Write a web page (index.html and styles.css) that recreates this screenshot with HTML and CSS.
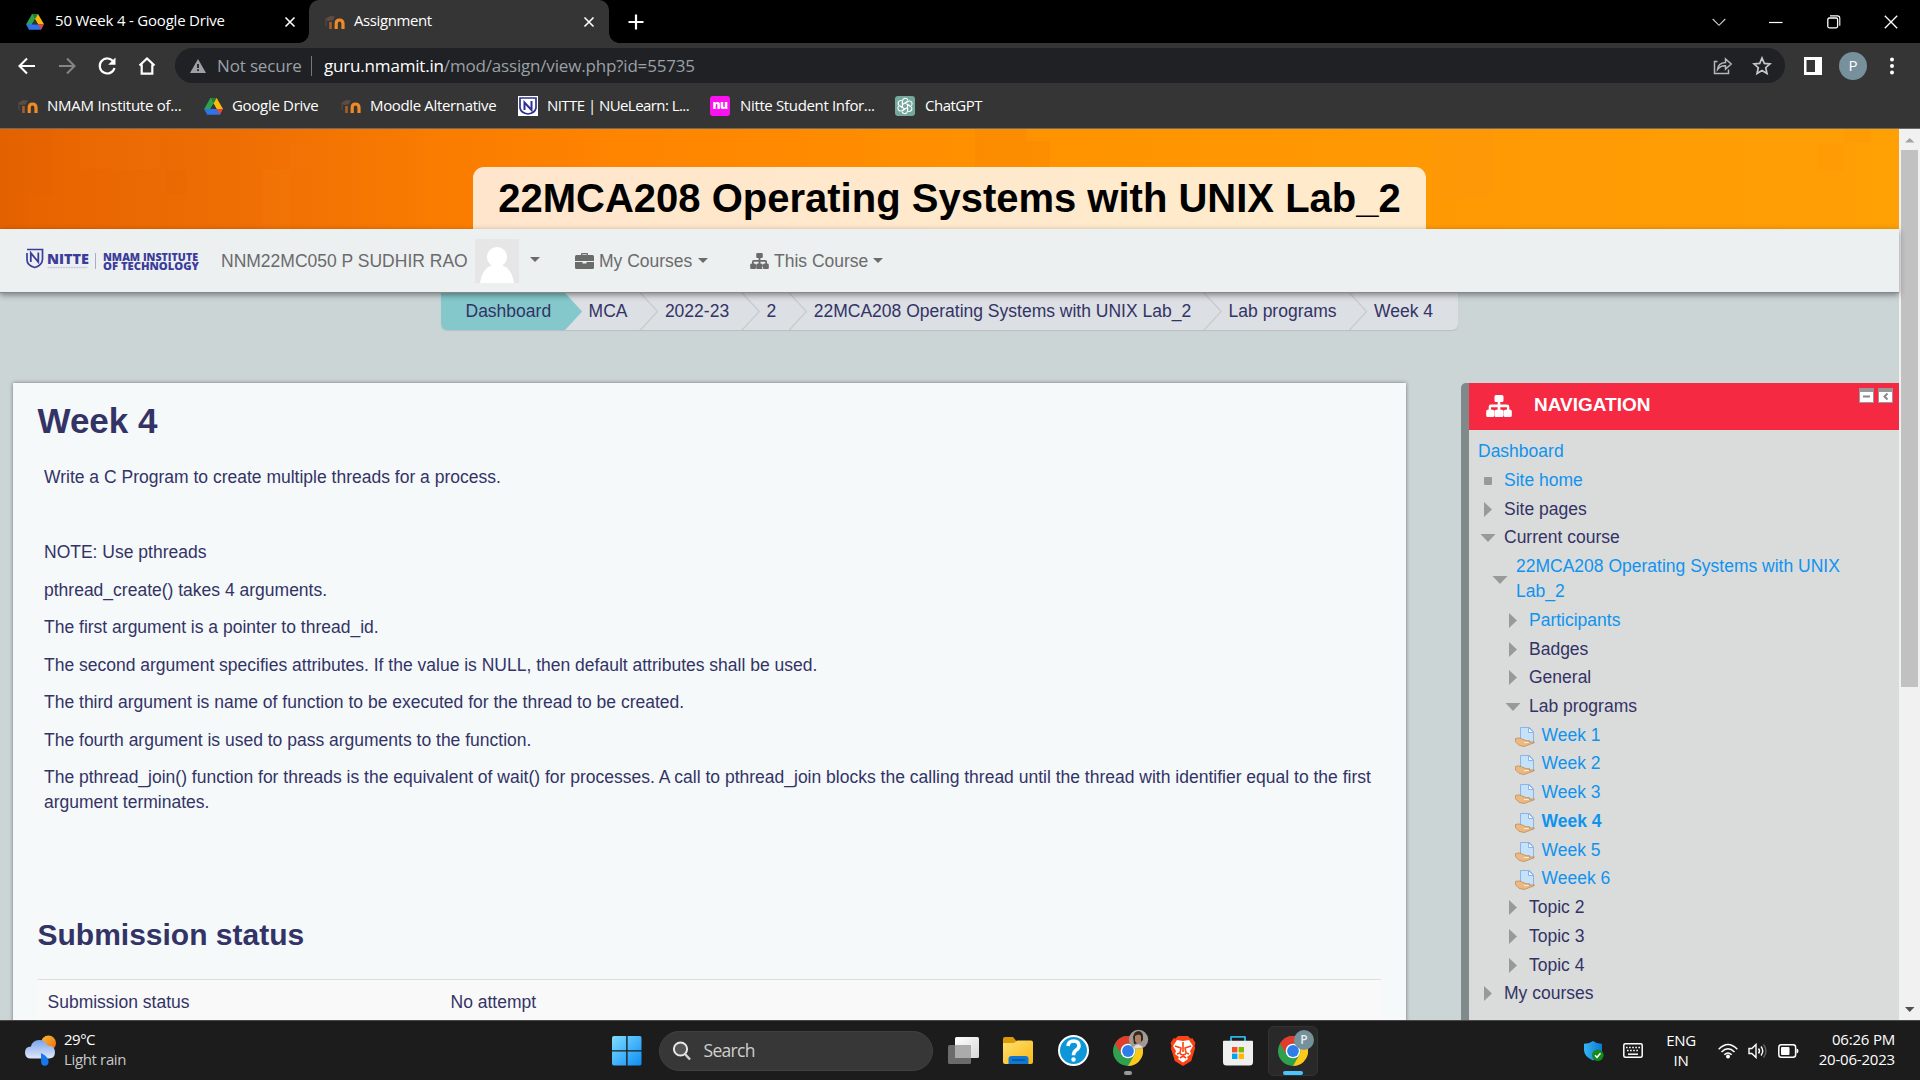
FILE: index.html
```html
<!DOCTYPE html>
<html lang="en">
<head>
<meta charset="utf-8">
<title>Assignment</title>
<link rel="stylesheet" href="styles.css">
</head>
<body>
<svg class="defs" width="0" height="0">
  <defs>
    <symbol id="drive" viewBox="0 0 18 16">
      <path fill="#2aa24f" d="M6 0h6L3.200 15.300.200 10.300z"/>
      <path fill="#fdbb09" d="M6 0h6l6 10.300h-6z"/>
      <path fill="#2f73e8" d="M.200 10.300h17.600L15 15.800H3z"/>
      <path fill="#188038" d="M6 0h6L9 5.200z"/>
      <path fill="#ea4335" d="M12 10.300h5.800L15 15.800z"/>
      <path fill="#353535" d="M9 5.300l2.900 5H6.100z"/>
    </symbol>
    <symbol id="moodle" viewBox="0 0 20 16">
      <path fill="none" stroke="#a85f2c" stroke-width="2.600" d="M5.500 15V8"/>
      <path fill="none" stroke="#f08a24" stroke-width="3.200" d="M11.200 15V9.500Q11.200 6 14.500 6T18 9.500V15"/>
      <path fill="#5c4c42" d="M0 5l5-3 5 .500-2.500 4L3 7z"/>
      <path stroke="#5c4c42" d="M1 5v7"/>
    </symbol>
    <symbol id="sitemap" viewBox="0 0 26 22">
      <path fill="currentColor" d="M10 0h6q1.500 0 1.500 1.500v4q0 1.500-1.500 1.500h-1.700v2.500H21q2.300 0 2.300 2.300v2.700q2.500 0 2.500 1.500v4.500q0 1.500-1.500 1.500h-5q-1.500 0-1.500-1.500V16q0-1.500 3.200-1.500v-2.300h-6.700v2.300q3.200 0 3.200 1.500v4.500Q17.500 22 16 22h-6q-1.500 0-1.500-1.500V16q0-1.500 3.200-1.500v-2.300H5v2.300q3.200 0 3.200 1.500v4.500Q8.200 22 6.700 22h-5Q.200 22 .200 20.500V16q0-1.500 2.500-1.500v-2.700q0-2.300 2.300-2.300h6.700V7H10Q8.500 7 8.500 5.500v-4Q8.500 0 10 0z"/>
    </symbol>
    <symbol id="caret" viewBox="0 0 10 5"><path fill="#6b6b6b" d="M0 0h10L5 5z"/></symbol>
    <symbol id="closed" viewBox="0 0 16 16"><path fill="#999" d="M4 0l8 7.500L4 15z"/></symbol>
    <symbol id="open" viewBox="0 0 16 16"><path fill="#999" d="M.500 4h15L8 12z"/></symbol>
    <symbol id="leaf" viewBox="0 0 16 16"><rect x="4" y="4" width="8" height="8" rx="1" fill="#999"/></symbol>
    <symbol id="assign" viewBox="0 0 20 20">
      <path fill="#c5e2f8" stroke="#8bb2ea" d="M5.500.500h9l4 4.500v11h-13z"/>
      <path fill="#f3faff" stroke="#8bb2ea" d="M13.500.500l5 5h-5z"/>
      <path fill="#ecb983" stroke="#c08a55" stroke-width=".800" d="M.500 11.500q3-1.300 6 .200l4.500 2h3.500q1 1-1 1.600l5.500-.500q1.300.300-.500 1.200L9 19.500l-5-1.200-3.500-3.500z"/>
      <path fill="none" stroke="#fff" stroke-width=".700" d="M9 15.500h5"/>
    </symbol>
    <symbol id="chrome" viewBox="0 0 30 30">
      <circle cx="15" cy="15" r="15" fill="#2fa04e"/>
      <path fill="#e33b2e" d="M2 7.500A15 15 0 0 1 28 7.500H15A7.500 7.500 0 0 0 8.500 18.700z"/>
      <path fill="#fdc818" d="M28 7.500A15 15 0 0 1 15 30l6.500-11.300A7.500 7.500 0 0 0 15 7.500z"/>
      <circle cx="15" cy="15" r="7.300" fill="#fff"/><circle cx="15" cy="15" r="5.900" fill="#2f7de9"/>
    </symbol>
    <linearGradient id="blueg" x1="0" y1="0" x2="1" y2="1"><stop offset="0" stop-color="#7fdcff"/><stop offset="1" stop-color="#0c8ef5"/></linearGradient>
    <linearGradient id="shieldg" x1="0" y1="0" x2="1" y2="0"><stop offset="0" stop-color="#35b5f2"/><stop offset="1" stop-color="#0c78d4"/></linearGradient>
    <linearGradient id="cloudg" x1="0" y1="0" x2="0" y2="1"><stop offset="0" stop-color="#7ba3ec"/><stop offset="1" stop-color="#dfe8fa"/></linearGradient>
    <linearGradient id="sung" x1="0" y1="0" x2="1" y2="1"><stop offset="0" stop-color="#f6bd36"/><stop offset="1" stop-color="#f06a0a"/></linearGradient>
    <linearGradient id="fold" x1="0" y1="0" x2="1" y2="1"><stop offset="0" stop-color="#ffdf70"/><stop offset="1" stop-color="#fbb913"/></linearGradient>
    <linearGradient id="tv" x1="0" y1="0" x2="1" y2="1"><stop offset="0" stop-color="#fff"/><stop offset="1" stop-color="#d8d8d8"/></linearGradient>
  </defs>
</svg>

<header class="browser">
  <div class="tabstrip">
    <div class="tab tab-idle">
      <svg width="18" height="16"><use href="#drive"/></svg>
      <span class="tab-title t-drive">50 Week 4 - Google Drive</span>
      <svg class="tab-x" width="12" height="12" viewBox="0 0 12 12"><path d="M1.500 1.500l9 9M10.500 1.500l-9 9" stroke="#fff" stroke-width="1.600"/></svg>
    </div>
    <div class="tab tab-active">
      <svg width="20" height="16"><use href="#moodle"/></svg>
      <span class="tab-title t-assign">Assignment</span>
      <svg class="tab-x" width="12" height="12" viewBox="0 0 12 12"><path d="M1.500 1.500l9 9M10.500 1.500l-9 9" stroke="#fff" stroke-width="1.600"/></svg>
    </div>
    <svg class="newtab" width="16" height="16" viewBox="0 0 16 16"><path d="M8 .500v15M.500 8h15" stroke="#fff" stroke-width="2.200"/></svg>
    <div class="winctl">
      <svg width="14" height="14" viewBox="0 0 14 14"><path d="M.700 4l6.300 6.300L13.300 4" fill="none" stroke="#d0d0d0" stroke-width="1.100"/></svg>
      <svg width="14" height="14" viewBox="0 0 14 14"><path d="M0 7.500h13.500" stroke="#fff" stroke-width="1.200"/></svg>
      <svg width="14" height="14" viewBox="0 0 14 14"><rect x=".800" y="3" width="9.800" height="9.800" rx="1.500" fill="none" stroke="#fff" stroke-width="1.300"/><path d="M3 .900h7.500q2.300 0 2.300 2.300v7.500" fill="none" stroke="#fff" stroke-width="1.100"/></svg>
      <svg width="14" height="14" viewBox="0 0 14 14"><path d="M.800.800l12.400 12.400M13.200.800L.800 13.200" stroke="#fff" stroke-width="1.300"/></svg>
    </div>
  </div>
  <div class="toolbar">
    <div class="navbtns">
      <svg width="20" height="20" viewBox="0 0 20 20"><path d="M18 10H3M10 2.500L2.500 10l7.500 7.500" fill="none" stroke="#fff" stroke-width="2.100"/></svg>
      <svg width="20" height="20" viewBox="0 0 20 20"><path d="M2 10h15M10 2.500l7.500 7.500-7.500 7.500" fill="none" stroke="#858585" stroke-width="2"/></svg>
      <svg width="20" height="20" viewBox="0 0 20 20"><path d="M16.300 5.500A7.500 7.500 0 1 0 17.500 12" fill="none" stroke="#fff" stroke-width="2.200"/><path fill="#fff" d="M18.500 1.500v7.300h-7.300z"/></svg>
      <svg width="20" height="20" viewBox="0 0 20 20"><path d="M2.500 9.500L10 2.500l7.500 7M4.700 8.500V17.700h10.600V8.500" fill="none" stroke="#fff" stroke-width="2.200"/></svg>
    </div>
    <div class="omnibox">
      <svg width="16" height="14" viewBox="0 0 16 14"><path fill="#9aa0a6" d="M8 0l8 14H0z"/><path stroke="#202124" stroke-width="1.800" d="M8 5v4M8 10.300v1.800"/></svg>
      <span class="notsec">Not secure</span>
      <span class="bar"></span>
      <span class="url"><b>guru.nmamit.in</b>/mod/assign/view.php?id=55735</span>
      <svg class="share" width="20" height="20" viewBox="0 0 20 20"><path d="M4.500 5.500H1.500v12h14v-4" fill="none" stroke="#b5b7b9" stroke-width="1.500"/><path d="M4.500 13.500q.500-6.500 8-7V3l5.700 5-5.700 5V9.800q-5-.300-8 3.700z" fill="none" stroke="#b5b7b9" stroke-width="1.500"/></svg>
      <svg class="star" width="20" height="20" viewBox="0 0 20 20"><path d="M10 2l2.300 5.400 5.700.500-4.300 3.800 1.300 5.700-5-3-5 3 1.300-5.700L2 7.900l5.700-.500z" fill="none" stroke="#c5c7c9" stroke-width="1.700"/></svg>
    </div>
    <svg class="panel" width="18" height="18" viewBox="0 0 18 18"><rect width="18" height="18" fill="#fff"/><rect x="2.500" y="3" width="8.500" height="12" fill="#353535"/></svg>
    <span class="avatar-p">P</span>
    <svg class="dots" width="4" height="18" viewBox="0 0 4 18"><g fill="#fff"><circle cx="2" cy="2.500" r="2"/><circle cx="2" cy="9" r="2"/><circle cx="2" cy="15.500" r="2"/></g></svg>
  </div>
  <div class="bookmarks">
    <span class="bm bm1"><svg width="20" height="16"><use href="#moodle"/></svg><span>NMAM Institute of...</span></span>
    <span class="bm bm2"><svg width="19" height="17"><use href="#drive"/></svg><span>Google Drive</span></span>
    <span class="bm bm3"><svg width="20" height="16"><use href="#moodle"/></svg><span>Moodle Alternative</span></span>
    <span class="bm bm4"><svg width="20" height="20" viewBox="0 0 20 20"><rect width="20" height="20" fill="#fff"/><path d="M2 2h16v10q-1 5-8 6-7-1-8-6z" fill="none" stroke="#2e3192" stroke-width="1.700"/><path d="M6.500 14V6.500l7 7.500V5" fill="none" stroke="#2e3192" stroke-width="2"/></svg><span>NITTE | NUeLearn: L...</span></span>
    <span class="bm bm5"><i class="nu">nu</i><span>Nitte Student Infor...</span></span>
    <span class="bm bm6"><svg width="20" height="20" viewBox="0 0 20 20"><rect width="20" height="20" rx="3" fill="#74a99b"/><g fill="none" stroke="#fff" stroke-width="1.100" transform="translate(10 10)"><g id="petal"><path d="M-2.500-1.500V-5q.300-2.500 2.800-2.700Q2.500-7.500 3-5.500M-2.500-1.500L2.500-4.500"/></g><use href="#petal" transform="rotate(60)"/><use href="#petal" transform="rotate(120)"/><use href="#petal" transform="rotate(180)"/><use href="#petal" transform="rotate(240)"/><use href="#petal" transform="rotate(300)"/></g></svg><span>ChatGPT</span></span>
  </div>
</header>

<div class="viewport">
  <div class="page">
    <div class="banner">
      <svg class="mosaic" width="1899" height="100" viewBox="0 0 1899 100">
        <g fill="#d85800" opacity=".07"><rect width="26" height="100"/><rect x="26" width="26" height="66"/><rect x="166" y="40" width="20" height="26"/><rect x="975" width="52" height="38"/><rect x="1022" y="12" width="28" height="26"/></g>
        <g fill="#ff8a20" opacity=".08"><rect x="80" width="79" height="40"/><rect x="263" y="40" width="27" height="60"/><rect x="290" y="14" width="26" height="26"/><rect x="1432" width="60" height="66"/></g>
        <g fill="#ff8a00" opacity=".16"><rect x="1817" y="15" width="27" height="27"/><rect x="1844" width="27" height="14"/></g>
      </svg>
      <h1>22MCA208 Operating Systems with UNIX Lab_2</h1>
    </div>
    <nav class="sitebar">
      <svg class="brand" width="176" height="26" viewBox="0 0 176 26">
        <path d="M2 2.500h15.500v10q-.500 6-7.700 8Q2 18.500 2 12.500V6" fill="none" stroke="#3b3c9b" stroke-width="1.700"/>
        <path d="M5.800 15V6l7.500 9V5.500" fill="none" stroke="#3b3c9b" stroke-width="1.800"/>
        <path d="M70.500 6v16" stroke="#a9aad0"/>
        <text class="bt" x="22" y="16.500" font-size="14" textLength="42" lengthAdjust="spacingAndGlyphs">NITTE</text>
        <path d="M22.500 20.500h40" stroke="#c6c7e2" stroke-width="1.300" stroke-dasharray="2 .600"/>
        <text class="bt" x="78" y="14" font-size="10.500" textLength="95" lengthAdjust="spacingAndGlyphs">NMAM INSTITUTE</text>
        <text class="bt" x="78" y="23" font-size="10.500" textLength="96" lengthAdjust="spacingAndGlyphs">OF TECHNOLOGY</text>
      </svg>
      <span class="uname">NNM22MC050 P SUDHIR RAO</span>
      <svg class="upic" width="44" height="44" viewBox="0 0 44 44"><rect width="44" height="44" fill="#e6e6e6"/><circle cx="22" cy="18" r="10" fill="#fff"/><path fill="#fff" d="M5 44q2-14 12-18h10q10 4 12 18z"/></svg>
      <svg class="c1" width="10" height="5"><use href="#caret"/></svg>
      <svg class="case" width="19" height="16" viewBox="0 0 19 16"><path fill="#6b6b6b" d="M6 2V1q0-1 1-1h5q1 0 1 1v1h4.500Q19 2 19 3.500V8H0V3.500Q0 2 1.500 2zm1.300 0h4.400v-.800H7.300zM0 9h7.500v1.500h4V9H19v5.500q0 1.500-1.500 1.500h-16Q0 16 0 14.500z"/></svg>
      <span class="menu m1">My Courses</span>
      <svg class="c2" width="10" height="5"><use href="#caret"/></svg>
      <svg class="smap" width="19" height="16"><use href="#sitemap"/></svg>
      <span class="menu m2">This Course</span>
      <svg class="c3" width="10" height="5"><use href="#caret"/></svg>
    </nav>
    <ol class="crumbs">
      <li class="first">Dashboard</li><li>MCA</li><li>2022-23</li><li>2</li><li>22MCA208 Operating Systems with UNIX Lab_2</li><li>Lab programs</li><li class="last">Week 4</li>
    </ol>
    <div class="columns">
      <main class="content">
        <h2>Week 4</h2>
        <div class="intro">
          <p>Write a C Program to create multiple threads for a process.</p>
          <p>&nbsp;</p>
          <p>NOTE: Use pthreads</p>
          <p>pthread_create() takes 4 arguments.</p>
          <p>The first argument is a pointer to thread_id.</p>
          <p>The second argument specifies attributes. If the value is NULL, then default attributes shall be used.</p>
          <p>The third argument is name of function to be executed for the thread to be created.</p>
          <p>The fourth argument is used to pass arguments to the function.</p>
          <p>The pthread_join() function for threads is the equivalent of wait() for processes. A call to pthread_join blocks the calling thread until the thread with identifier equal to the first argument terminates.</p>
        </div>
        <h3>Submission status</h3>
        <div class="status-row"><span>Submission status</span><span>No attempt</span></div>
      </main>
      <aside class="block">
        <div class="block-head">
          <svg width="26" height="22"><use href="#sitemap"/></svg>
          <h4>NAVIGATION</h4>
          <div class="block-btns">
            <svg width="15" height="15" viewBox="0 0 15 15"><rect x=".500" y=".500" width="14" height="14" fill="#fff" stroke="#999"/><rect width="15" height="4" fill="#999"/><rect x="4" y="7.500" width="7" height="2" fill="#888"/></svg>
            <svg width="15" height="15" viewBox="0 0 15 15"><rect x=".500" y=".500" width="14" height="14" fill="#fff" stroke="#999"/><rect width="15" height="4" fill="#999"/><path d="M9.500 5.500L6.500 8.500l3 3" fill="none" stroke="#888" stroke-width="2"/></svg>
          </div>
        </div>
        <ul class="tree">
          <li class="l0 link">Dashboard</li>
          <li class="l1 link"><svg><use href="#leaf"/></svg>Site home</li>
          <li class="l1"><svg><use href="#closed"/></svg>Site pages</li>
          <li class="l1"><svg><use href="#open"/></svg>Current course</li>
          <li class="l2 link two"><svg><use href="#open"/></svg><span>22MCA208 Operating Systems with UNIX<br>Lab_2</span></li>
          <li class="l3 link"><svg><use href="#closed"/></svg>Participants</li>
          <li class="l3"><svg><use href="#closed"/></svg>Badges</li>
          <li class="l3"><svg><use href="#closed"/></svg>General</li>
          <li class="l3"><svg><use href="#open"/></svg>Lab programs</li>
          <li class="l4 link"><svg><use href="#assign"/></svg>Week 1</li>
          <li class="l4 link"><svg><use href="#assign"/></svg>Week 2</li>
          <li class="l4 link"><svg><use href="#assign"/></svg>Week 3</li>
          <li class="l4 link current"><svg><use href="#assign"/></svg>Week 4</li>
          <li class="l4 link"><svg><use href="#assign"/></svg>Week 5</li>
          <li class="l4 link"><svg><use href="#assign"/></svg>Weeek 6</li>
          <li class="l3"><svg><use href="#closed"/></svg>Topic 2</li>
          <li class="l3"><svg><use href="#closed"/></svg>Topic 3</li>
          <li class="l3"><svg><use href="#closed"/></svg>Topic 4</li>
          <li class="l1"><svg><use href="#closed"/></svg>My courses</li>
        </ul>
      </aside>
    </div>
  </div>
  <div class="scrollbar">
    <svg width="21" height="21" viewBox="0 0 21 21"><path fill="#a3a3a3" d="M6 13.500h9.500L10.700 9z"/></svg>
    <div class="thumb"></div>
    <svg width="21" height="21" viewBox="0 0 21 21"><path fill="#505050" d="M6 8h9.500l-4.800 5z"/></svg>
  </div>
</div>

<footer class="taskbar">
  <svg class="weather" width="32" height="32" viewBox="0 0 32 32"><circle cx="23.500" cy="8" r="7.500" fill="url(#sung)"/><path fill="url(#cloudg)" d="M6 23.500q-6 0-6-6t6-6Q7.500 5 14 5t8.500 5.500q7.500 0 7.500 6.500t-6 6.500z"/><path fill="#1877ea" d="M16 18q8 4 7.500 9a3.700 3.700 0 0 1-7.400 0z"/></svg>
  <div class="temp"><span class="deg">29°C</span><span class="rain">Light rain</span></div>
  <svg class="win" width="30" height="30" viewBox="0 0 30 30"><g fill="url(#blueg)"><path d="M0 2q0-2 2-2h12.200v14.200H0zM15.600 0H28q1.500 0 1.500 2v12.200H15.600zM0 15.600h14.200v13.900H2q-2 0-2-2zM15.600 15.600h13.900v12q0 1.900-1.500 1.900H15.600z"/></g></svg>
  <div class="search">
    <svg width="20" height="20" viewBox="0 0 20 20"><circle cx="8.500" cy="8" r="6.600" fill="#555" stroke="#e8e8e8" stroke-width="2"/><path d="M13 13l5 5.500" stroke="#d5d5d5" stroke-width="2.500"/></svg>
    <span>Search</span>
  </div>
  <svg class="i-tv" width="31" height="28" viewBox="0 0 31 28"><rect x="7" width="24" height="21" rx="1.500" fill="url(#tv)"/><rect y="8" width="23" height="19" rx="1.500" fill="#6b6b6b"/><rect x="7" y="8" width="16" height="13" fill="#ababab"/></svg>
  <svg class="i-fold" width="30" height="28" viewBox="0 0 30 28"><path fill="#dc9a08" d="M0 2q0-2 2-2h8l3 3.500v8H0z"/><path fill="url(#fold)" d="M0 6h11l3-2.500h14q2 0 2 2V25q0 2-2 2H2q-2 0-2-2z"/><path fill="#0e78d2" d="M5.500 27v-5q0-3 3-3h14q3 0 3 3v5z"/><path d="M9 23h13" stroke="#0b4f94" stroke-width="1.500"/></svg>
  <svg class="i-help" width="31" height="31" viewBox="0 0 31 31"><circle cx="15.500" cy="15.500" r="14.500" fill="#0c98d8" stroke="#fff" stroke-width="2"/><path d="M10 11q.500-5 5.500-5 5.500.300 5.500 4.800 0 2.700-3 4.500-2.500 1.600-2.500 5" fill="none" stroke="#fff" stroke-width="3.600"/><circle cx="15.500" cy="24.500" r="2.200" fill="#fff"/></svg>
  <svg class="i-chrome" width="50" height="50" viewBox="0 0 50 50"><use href="#chrome" x="10" y="10" width="30" height="30"/><circle cx="35.500" cy="13.500" r="9.700" fill="#a09a92"/><path fill="#33261f" d="M30 11q1-6 6-6 5 1 4 9l-3 3-6 1z"/><path fill="#ad8168" d="M32 10q4-3 6 0v6l-3 3-3-4z"/><path fill="#ddd" d="M30 21l5-3 5 3q-5 3-10 0z"/><rect x="21" y="45" width="8" height="4" rx="2" fill="#999"/></svg>
  <svg class="i-brave" width="26" height="30" viewBox="0 0 26 30"><path fill="#fb4315" d="M8 0h10l2.500 2.500 2-.300L25.500 7l-1 3 .700 2-4 13-8.200 5-8.200-5-4-13 .700-2-1-3 3-4.800 2 .300z"/><path fill="#fff" d="M13 5l6-1 4 6-3 5 1 3-4 3 1 2-5 3.500-5-3.500 1-2-4-3 1-3-3-5 4-6z"/><path fill="none" stroke="#fb4315" stroke-width="1.600" d="M5 10l6 2-1 5-3 1M21 10l-6 2 1 5 3 1M13 6v10M10 22l3-2 3 2M10 18l3 1 3-1"/></svg>
  <svg class="i-store" width="30" height="30" viewBox="0 0 30 30"><path d="M8 6V1.500q0-.700.700-.700h12.600q.700 0 .700.700V6" fill="none" stroke="#28b4ea" stroke-width="1.900"/><path fill="#efefef" d="M0 5.500q0-.800.800-.800h28.400q.800 0 .800.800V26q0 3.500-3.500 3.500h-23Q0 29.500 0 26z"/><path fill="#f25022" d="M9 11h5.400v5.400H9z"/><path fill="#7fba00" d="M15.600 11H21v5.400h-5.400z"/><path fill="#00a4ef" d="M9 17.600h5.400V23H9z"/><path fill="#ffb900" d="M15.600 17.600H21V23h-5.400z"/></svg>
  <svg class="i-chrome2" width="50" height="50" viewBox="0 0 50 50"><rect x=".500" y=".500" width="49" height="49" rx="5" fill="#292929" stroke="#333"/><use href="#chrome" x="10" y="10" width="30" height="30"/><circle cx="36" cy="14" r="10" fill="#76909c"/><text class="pp" x="36" y="18.200" text-anchor="middle">P</text><rect x="15" y="45" width="20" height="4" rx="2" fill="#4cc2ff"/></svg>
  <div class="tray">
    <svg class="shield" width="20" height="20" viewBox="0 0 20 20"><path fill="url(#shieldg)" d="M9 0q4 3 9 2.800V9q0 6.500-9 10.500Q0 15.500 0 9V2.800Q5 3 9 0z"/><circle cx="13.800" cy="14.200" r="5.800" fill="#128a1c"/><path d="M11 14.300l2 2 3.500-4" fill="none" stroke="#fff" stroke-width="1.500"/></svg>
    <svg class="kbd" width="20" height="15" viewBox="0 0 20 15"><rect x=".800" y=".800" width="18.400" height="13.400" rx="1.500" fill="none" stroke="#fff" stroke-width="1.500"/><path d="M3 4.500h14M4 7.500h12" stroke="#fff" stroke-width="1.600" stroke-dasharray="1.600 1.500"/><path d="M5 11.200h10" stroke="#fff" stroke-width="1.500"/></svg>
    <div class="lang"><span>ENG</span><span>IN</span></div>
    <svg class="wifi" width="20" height="16" viewBox="0 0 20 16"><g fill="none" stroke="#fff" stroke-width="1.500"><path d="M.700 6.200q9.300-9.500 18.600 0M3.500 9q6.500-6.500 13 0M6.300 11.800q3.700-3.600 7.400 0"/></g><circle cx="10" cy="13.500" r="2" fill="#fff"/></svg>
    <svg class="vol" width="20" height="16" viewBox="0 0 20 16"><path d="M1 5.500h2.800L8 1.500v13l-4.200-4H1z" fill="none" stroke="#fff" stroke-width="1.400"/><path d="M10.500 5.500q2 2.500 0 5M13 3.500q3.500 4.500 0 9" fill="none" stroke="#fff" stroke-width="1.400"/><path d="M15.500 1.500q5 6.500 0 13" fill="none" stroke="#666" stroke-width="1.300"/></svg>
    <svg class="bat" width="21" height="14" viewBox="0 0 21 14"><rect x=".800" y=".800" width="16.800" height="12.400" rx="2.500" fill="none" stroke="#fff" stroke-width="1.500"/><rect x="3" y="3" width="8.500" height="8" rx="1" fill="#fff"/><path d="M18.500 4.500q2 .300 2 2.500t-2 2.500z" fill="#fff"/></svg>
    <div class="clock"><span class="time">06:26 PM</span><span class="date">20-06-2023</span></div>
  </div>
</footer>
</body>
</html>
```
FILE: styles.css
```css
* { box-sizing: border-box; }
body {
  margin: 0; width: 1920px; height: 1080px; overflow: hidden;
  display: flex; flex-direction: column;
  font-family: "Open Sans", "Noto Sans", sans-serif; font-size: 15px; background: #000;
}
svg { display: block; flex: none; }
.defs { position: absolute; }
h1, h2, h3, h4, p, ul, ol { margin: 0; padding: 0; }
ul, ol { list-style: none; }
span { white-space: nowrap; }

/* Browser chrome */
.browser { flex: none; height: 129px; background: #353535; border-bottom: 1px solid #6a6a6a; color: #fff; }
.tabstrip { height: 43px; background: #000; display: flex; align-items: center; }
.tab { display: flex; align-items: center; height: 43px; position: relative; }
.tab-idle { width: 309px; padding-left: 26px; gap: 11px; }
.tab-active { width: 300px; padding-left: 16px; gap: 9px; background: #353535; border-radius: 10px 10px 0 0; }
.tab-active::before, .tab-active::after {
  content: ""; position: absolute; bottom: 0; width: 10px; height: 10px;
}
.tab-active::before { left: -10px; background: radial-gradient(circle at 0 0, #000 9.500px, #353535 10px); }
.tab-active::after { right: -10px; background: radial-gradient(circle at 100% 0, #000 9.500px, #353535 10px); }
.tab-title { line-height: 20px; padding-bottom: 4px; }
.tab-x { margin-left: auto; }
.tab-idle .tab-x { margin-right: 13px; }
.tab-active .tab-x { margin-right: 14px; }
.t-drive { letter-spacing: -0.200px; }
.t-assign { letter-spacing: -0.400px; }
.newtab { margin-left: 19px; }
.winctl { margin-left: auto; display: flex; gap: 43.500px; padding-right: 22px; height: 36px; align-items: center; }

.toolbar { height: 45px; display: flex; align-items: center; }
.navbtns { display: flex; gap: 20px; padding-left: 17px; width: 175px; }
.omnibox { width: 1610px; height: 35px; border-radius: 18px; background: #202124; display: flex; align-items: center; font-size: 17px; color: #9aa0a6; }
.omnibox > svg:first-child { margin-left: 15px; }
.notsec { margin-left: 11px; width: 94px; letter-spacing: -0.150px; }
.bar { width: 1px; height: 20px; background: #777; margin-right: 12px; }
.url { letter-spacing: -0.180px; }
.url b { font-weight: 400; color: #fff; }
.share { margin-left: auto; margin-right: 19px; }
.star { margin-right: 13px; }
.panel { margin-left: 19px; }
.avatar-p { margin-left: 17px; width: 28px; height: 28px; border-radius: 50%; background: #76909c; font-size: 15px; line-height: 27px; text-align: center; }
.dots { margin-left: 23px; }

.bookmarks { height: 40px; display: flex; align-items: center; padding: 0 0 4px 18px; }
.bm { display: flex; align-items: center; gap: 9px; flex: none; }
.bm > span { padding-bottom: 2px; }
.bm1 { width: 186px; letter-spacing: -0.250px; }
.bm2 { width: 137px; letter-spacing: -0.300px; }
.bm3 { width: 177px; letter-spacing: -0.350px; }
.bm4 { width: 192px; letter-spacing: -0.560px; }
.bm5 { width: 185px; gap: 10px; letter-spacing: -0.350px; }
.bm6 { gap: 10px; letter-spacing: -0.500px; }
.nu { width: 20px; height: 20px; border-radius: 3px; background: #fb12ee; font: 800 12px/17px "Open Sans", sans-serif; text-align: center; letter-spacing: -0.500px; }

/* Web page */
.viewport { height: 891px; display: flex; font-family: "Liberation Sans", Arial, sans-serif; font-size: 17.500px; line-height: 25px; color: #336; overflow: hidden; }
.page { width: 1899px; background: #ccd5d6; }
.banner { height: 100px; padding-top: 38px; display: flex; justify-content: center; position: relative;
  background: linear-gradient(90deg, #e66200 0, #f07004 270px, #fa7c00 440px, #ff8400 620px, #ff9300 1050px, #ff9a04 1500px, #ffa005 1899px); }
.mosaic { position: absolute; left: 0; top: 0; }
.banner h1 { position: relative; width: 953px; height: 62px; background: rgba(255, 255, 255, .8); border-radius: 11px 11px 0 0; color: #000; font-size: 40px; line-height: 62px; text-align: center; white-space: nowrap; }
.sitebar { position: relative; z-index: 2; height: 64px; background: #ecf0f1; border-bottom: 1px solid #85898b; box-shadow: 0 2px 6px rgba(0, 0, 0, .42); display: flex; align-items: center; color: #6b6b6b; padding-left: 25px; }
.brand { margin-top: -2px; }
.bt { font-family: "Open Sans", sans-serif; font-weight: 800; fill: #3b3c9b; }
.uname { margin-left: 20px; width: 254px; padding-top: 1px; }
.c1 { margin-left: 11px; margin-top: -3px; }
.case { margin-left: 35px; }
.menu { margin-left: 5px; width: 94px; padding-top: 2px; }
.c2 { margin-left: 5px; }
.smap { margin-left: 42px; }
.m2 { margin-left: 5px; }
.c3 { margin-left: 5px; }

.crumbs { display: flex; width: 1017px; height: 37px; margin-left: 441px; border-radius: 0 0 6px 6px; background: #dcdfe3; box-shadow: 0 1px 1px rgba(0, 0, 0, .1); overflow: hidden; line-height: 36px; white-space: nowrap; }
.crumbs li { display: flex; padding-left: 6.450px; }
.crumbs li::after { content: ""; width: 19px; height: 37px; margin-left: 12px; background: #c9cdd1; clip-path: polygon(0 0, 2px 0, 19px 50%, 2px 100%, 0 100%, 17px 50%); }
.crumbs .first { padding-left: 24.500px; background: linear-gradient(90deg, #84c8cb 123px, transparent 123px); }
.crumbs .first::after { background: #84c8cb; clip-path: polygon(0 0, 2px 0, 19px 50%, 2px 100%, 0 100%); }
.crumbs .last::after { display: none; }

.columns { display: flex; padding-left: 13px; margin-top: 53px; gap: 55px; }
.content { width: 1393px; height: 660px; background: #f5f9fa; box-shadow: 0 0 4px rgba(0, 0, 0, .45); padding: 15px 25px 15px 24.500px; }
.content h2 { font-size: 35px; line-height: 46px; }
.intro { padding: 21px 6px 0 6.500px; }
.intro p { margin-bottom: 12.500px; }
.content h3 { font-size: 30px; line-height: 40px; margin-top: 99.500px; }
.status-row { display: grid; grid-template-columns: 403px 1fr; margin-top: 24px; height: 60px; padding: 10px; background: #f9f9f9; border-top: 1px solid #ddd; width: 1343px; }

.block { width: 438px; height: 660px; background: #dadcdb; border-left: 8px solid #808a8b; border-top-left-radius: 5px; }
.block-head { height: 47px; background: #f62943; color: #fff; display: flex; align-items: center; padding: 0 6px 0 17px; }
.block-head > svg { margin-bottom: 2px; }
.block-head h4 { margin-left: 22px; font-size: 19px; line-height: 44px; padding-bottom: 3px; }
.block-btns { margin-left: auto; display: flex; gap: 4px; align-self: flex-start; padding-top: 5px; }
.tree { padding: 7.450px 0 0 9px; }
.tree li { height: 28.730px; display: flex; align-items: center; gap: 8px; white-space: nowrap; }
.tree .two { height: 53.730px; }
.tree svg { width: 16px; height: 16px; position: relative; top: .500px; }
.l1 { padding-left: 2px; }
.l2 { padding-left: 14px; }
.l3 { padding-left: 27px; }
.l4 { padding-left: 37px; }
.tree .l4 { gap: 6.500px; }
.tree .l4 svg { width: 20px; height: 20px; top: 1.500px; }
.link { color: #1093ef; }
.current { font-weight: 700; }

.scrollbar { width: 21px; background: #f1f1f1; display: flex; flex-direction: column; }
.thumb { width: 17px; height: 537px; margin: 0 2px auto; background: #c1c1c1; }

/* Taskbar */
.taskbar { height: 60px; background: #1c1c1c; border-top: 1px solid #484848; display: flex; align-items: center; color: #fff; padding: 0 25px; line-height: 20px; }
.taskbar > svg { position: relative; }
.temp { display: flex; flex-direction: column; margin-left: 7px; width: 548px; padding-bottom: 4px; }
.deg { letter-spacing: -0.500px; }
.rain { color: #c8c8c8; letter-spacing: -0.350px; }
.win { margin-left: -.500px; }
.search { margin-left: 17px; width: 274px; height: 40px; border-radius: 20px; background: #373737; border: 1px solid #404040; display: flex; align-items: center; padding-left: 12px; gap: 12px; font-size: 17.500px; color: #cfcfcf; letter-spacing: -0.700px; }
.search span { padding-bottom: 2px; }
.i-tv { margin-left: 15px; }
.i-fold { margin-left: 24px; }
.i-help { margin-left: 25px; }
.i-chrome { margin-left: 14px; }
.i-brave { margin-left: 17px; }
.i-store { margin-left: 27px; }
.i-chrome2 { margin-left: 15px; }
.pp { font: 600 12px "Open Sans", sans-serif; fill: #e8eef0; }
.tray { margin-left: auto; display: flex; align-items: center; }
.kbd { margin-left: 19px; }
.lang { margin-left: 23px; width: 30px; display: flex; flex-direction: column; align-items: center; letter-spacing: -0.300px; padding-bottom: 2px; }
.wifi { margin-left: 22px; }
.vol { margin-left: 10px; }
.bat { margin-left: 10px; }
.clock { margin-left: 19px; width: 77px; display: flex; flex-direction: column; align-items: flex-end; letter-spacing: -0.200px; padding-bottom: 4px; }
```
